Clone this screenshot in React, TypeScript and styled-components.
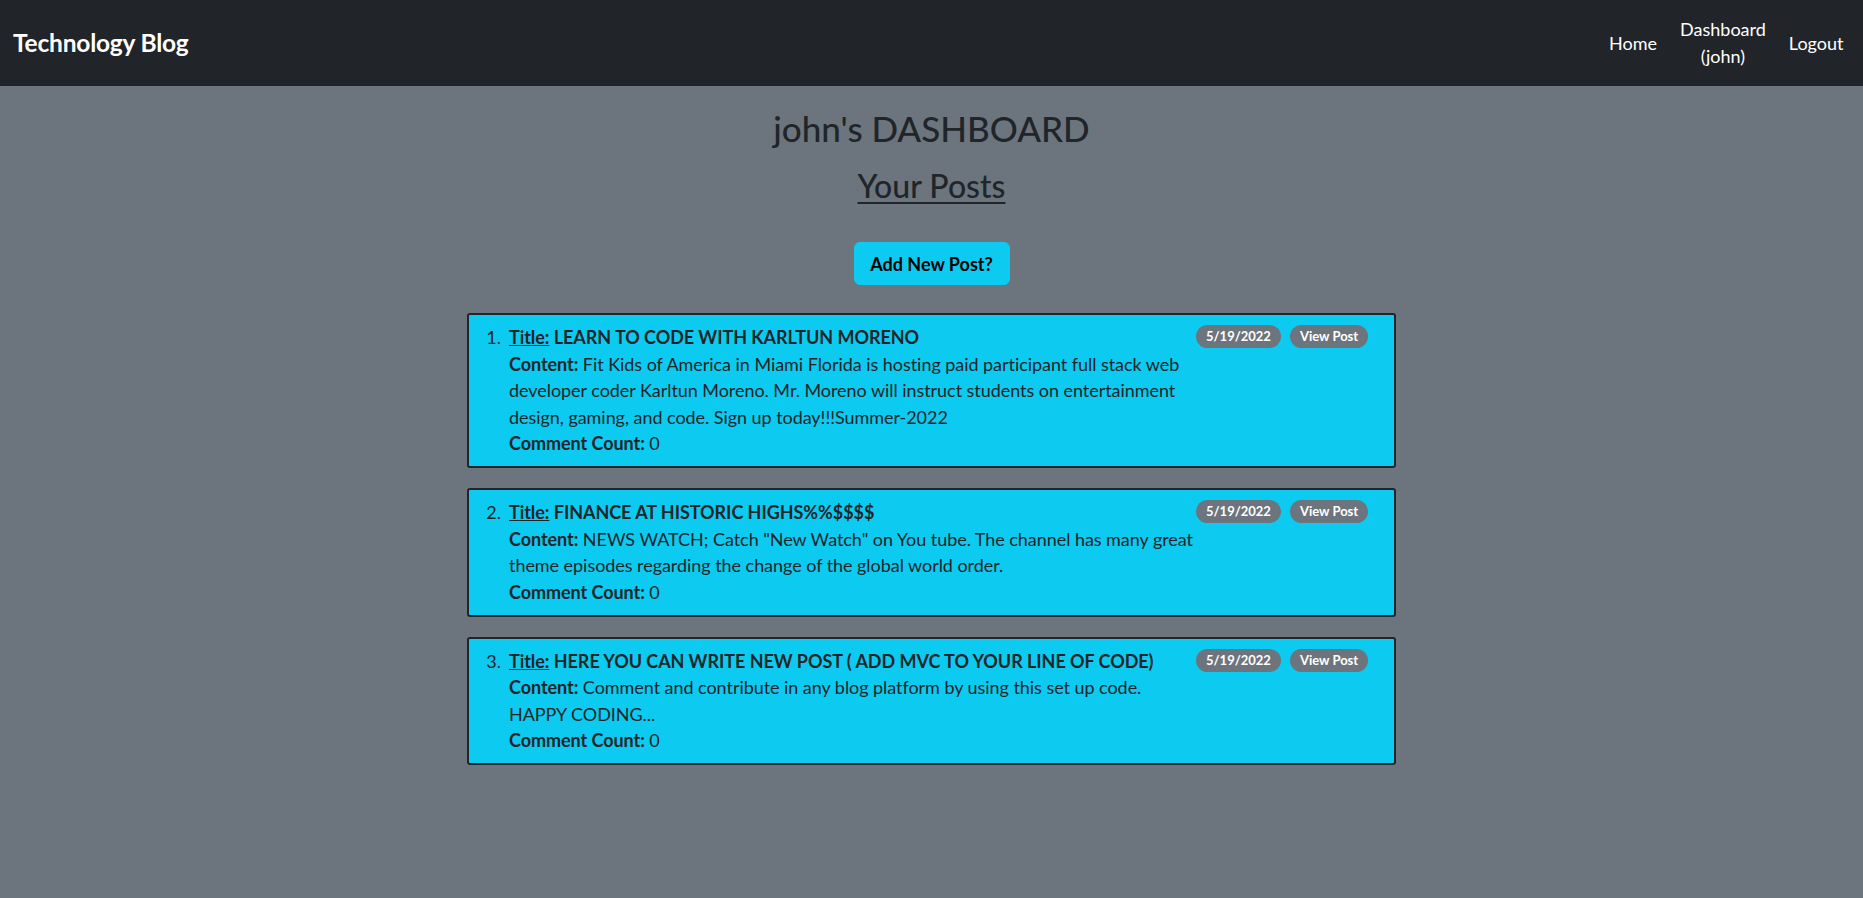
import React from "react";
import styled, { createGlobalStyle } from "styled-components";

interface Post {
  title: string;
  content: string;
  date: string;
  comments: number;
}

const posts: Post[] = [
  {
    title: "LEARN TO CODE WITH KARLTUN MORENO",
    content:
      "Fit Kids of America in Miami Florida is hosting paid participant full stack web developer coder Karltun Moreno. Mr. Moreno will instruct students on entertainment design, gaming, and code. Sign up today!!!Summer-2022",
    date: "5/19/2022",
    comments: 0,
  },
  {
    title: "FINANCE AT HISTORIC HIGHS%%$$$$",
    content:
      'NEWS WATCH; Catch "New Watch" on You tube. The channel has many great theme episodes regarding the change of the global world order.',
    date: "5/19/2022",
    comments: 0,
  },
  {
    title: "HERE YOU CAN WRITE NEW POST ( ADD MVC TO YOUR LINE OF CODE)",
    content:
      "Comment and contribute in any blog platform by using this set up code. HAPPY CODING...",
    date: "5/19/2022",
    comments: 0,
  },
];

export default function App() {
  return (
    <>
      <GlobalStyle />
      <ScNavbar>
        <ScBrand>Technology Blog</ScBrand>
        <ScNavLinks>
          <ScNavLink>Home</ScNavLink>
          <ScNavLink>
            Dashboard
            <br />
            (john)
          </ScNavLink>
          <ScNavLink>Logout</ScNavLink>
        </ScNavLinks>
      </ScNavbar>

      <ScMain>
        <ScHeading>john's DASHBOARD</ScHeading>
        <ScSubHeading>Your Posts</ScSubHeading>
        <ScAddButton>Add New Post?</ScAddButton>

        <ScPostList>
          {posts.map((post, i) => (
            <ScPostCard key={i}>
              <ScMarker>{i + 1}.</ScMarker>
              <ScPostBody>
                <ScTitleLine>
                  <ScTitleLabel>Title:</ScTitleLabel> {post.title}
                </ScTitleLine>
                <ScLine>
                  <strong>Content:</strong> {post.content}
                </ScLine>
                <ScLine>
                  <strong>Comment Count:</strong> {post.comments}
                </ScLine>
              </ScPostBody>
              <ScBadges>
                <ScBadge>{post.date}</ScBadge>
                <ScBadge>View Post</ScBadge>
              </ScBadges>
            </ScPostCard>
          ))}
        </ScPostList>
      </ScMain>
    </>
  );
}

const GlobalStyle = createGlobalStyle`
  * {
    box-sizing: border-box;
  }
  html, body {
    margin: 0;
    padding: 0;
  }
  body {
    background-color: #6c757d;
    color: #212529;
    font-family: "Segoe UI", Lato, "Noto Sans", sans-serif;
    font-size: 18px;
    line-height: 1.5;
    min-height: 898px;
  }
`;

const ScNavbar = styled.nav`
  height: 86px;
  background-color: #212529;
  display: flex;
  align-items: center;
  justify-content: space-between;
  padding: 0 8px 0 13px;
`;

const ScBrand = styled.a`
  color: #ffffff;
  font-size: 24.5px;
  font-weight: 700;
  letter-spacing: -0.2px;
`;

const ScNavLinks = styled.div`
  display: flex;
  align-items: center;
`;

const ScNavLink = styled.a`
  color: #ffffff;
  font-size: 18px;
  line-height: 27px;
  text-align: center;
  padding: 0 11.5px;
`;

const ScMain = styled.main`
  display: flex;
  flex-direction: column;
  align-items: center;
  padding-top: 21px;
`;

const ScHeading = styled.h2`
  margin: 0;
  font-size: 35px;
  font-weight: 500;
  line-height: 1.2;
`;

const ScSubHeading = styled.h3`
  margin: 18px 0 0;
  font-size: 32px;
  font-weight: 500;
  line-height: 1.2;
  text-decoration: underline;
  text-underline-offset: 4px;
  text-decoration-thickness: 2px;
`;

const ScAddButton = styled.button`
  margin-top: 37px;
  width: 156px;
  height: 43px;
  background-color: #0dcaf0;
  border: 1px solid #0dcaf0;
  border-radius: 6px;
  color: #000000;
  font-family: inherit;
  font-size: 18px;
  font-weight: 700;
`;

const ScPostList = styled.div`
  margin-top: 28px;
  width: 929px;
  display: flex;
  flex-direction: column;
  gap: 20px;
`;

const ScPostCard = styled.div`
  display: grid;
  grid-template-columns: 40px 1fr 172px;
  background-color: #0dcaf0;
  border: 2px solid #212529;
  border-radius: 3px;
  padding: 9px 26px 9.5px 0;
  line-height: 26.5px;
`;

const ScMarker = styled.span`
  text-align: right;
  padding-right: 8px;
`;

const ScPostBody = styled.div`
  letter-spacing: -0.05px;
`;

const ScTitleLine = styled.div`
  font-weight: 700;
`;

const ScTitleLabel = styled.span`
  text-decoration: underline;
`;

const ScLine = styled.div``;

const ScBadges = styled.div`
  display: flex;
  gap: 9px;
  align-items: flex-start;
  padding-top: 1px;
`;

const ScBadge = styled.span`
  background-color: #6c757d;
  color: #ffffff;
  font-size: 13px;
  font-weight: 700;
  line-height: 23px;
  height: 23px;
  padding: 0 10px;
  border-radius: 12px;
  white-space: nowrap;
`;
